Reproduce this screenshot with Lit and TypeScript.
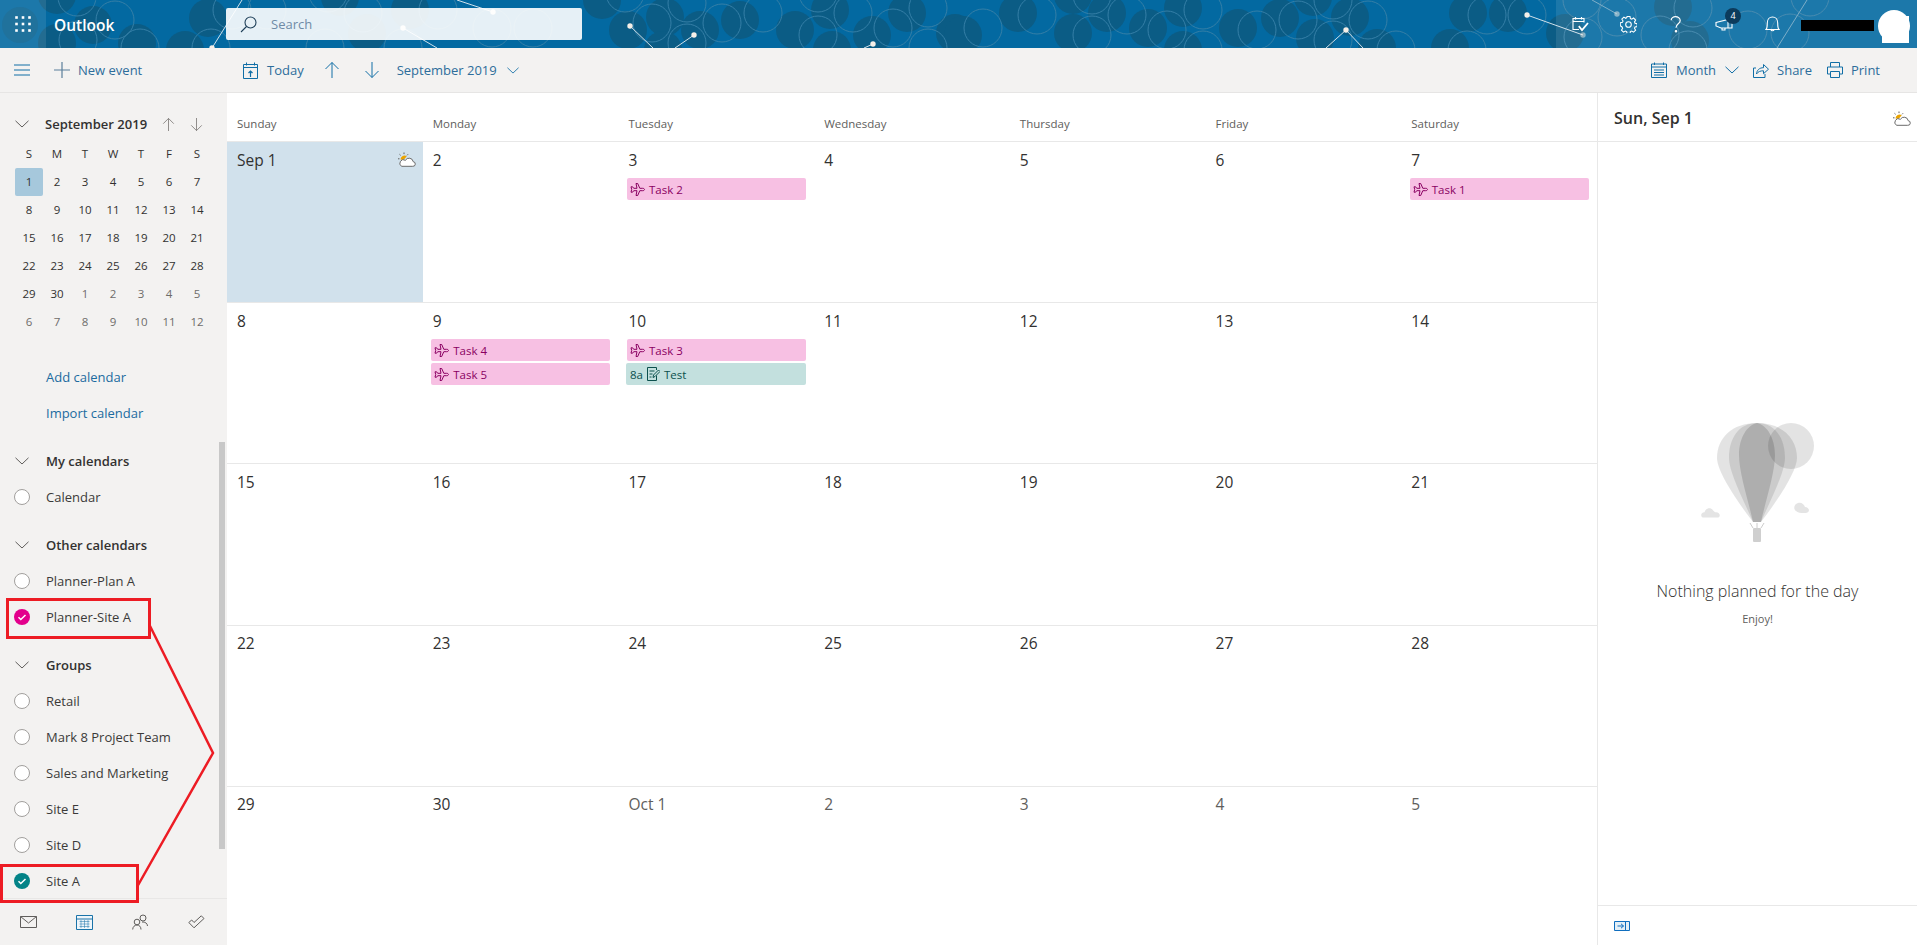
import { LitElement, html, css, svg } from 'lit';
import { customElement } from 'lit/decorators.js';

// header pattern, read off the reference as [x, y] per strip
const fills = [
  [57, -5], [93, 25], [57, 43], [208, 18], [185, 50], [137, 43], [340, -3], [410, 10], [367, 33],
  [602, 0], [628, 30], [665, 17], [700, 30], [740, 20], [795, 30], [830, 10], [832, 50], [872, 35], [907, 13], [663, 50], [955, 33],
  [1018, 13], [1073, 33], [1107, 13], [1148, 28], [1183, 8], [1183, 50], [1238, 28], [1280, 18], [1315, 38], [1350, 17], [1377, 48], [963, 35], [1073, -5], [1313, -3],
  [1468, 13], [1508, 13], [1450, 48], [1565, 33], [1673, 7], [1690, 40],
];
const rings = [
  [77, -3], [115, 20], [78, 40], [140, 48], [211, 48], [232, 10], [267, 10], [328, -7], [363, 13], [325, 48], [403, 48], [438, 10],
  [492, 28], [533, 28], [625, -7], [652, 23], [687, 3], [687, 43], [722, 23], [763, 13], [818, -7], [818, 35], [853, 13], [893, 28], [928, 8], [928, 48],
  [983, 28], [1037, 15], [1092, -5], [1092, 35], [1127, 15], [1167, 30], [1203, 10], [1203, 50], [1257, 30], [1298, 20], [1333, 0], [1333, 40], [1368, 20], [1396, 50],
  [1487, 15], [1527, 15], [1467, 50], [1583, 37], [1582, 0], [1617, 17], [1660, 35], [1688, 50], [1693, 8], [1748, 30], [1790, 33], [1810, -3],
];
const wires = [
  [242, 0, 212, 48], [403, 28, 437, 48], [457, 0, 493, 12], [630, 26, 653, 48], [694, 35, 675, 48], [873, 44, 864, 48],
  [1346, 30, 1326, 48], [1346, 30, 1363, 48], [1527, 15, 1583, 35],
];
const dimWires = [[1592, 0, 1617, 14], [1807, 0, 1777, 48]];
const nodes = [[212, 48, 1], [403, 28, 1], [493, 12, 1], [630, 26, 1], [694, 35, 1], [873, 44, 1], [1346, 30, 1], [1527, 15, 1], [1583, 35, 0.5], [1617, 14, 0.5]];

const plane = svg`<svg class="ic" width="15" height="15" viewBox="0 0 15 15" fill="none" stroke="currentColor" stroke-width="1">
  <path d="M14.500 7.500c0-.7-.8-1.200-1.800-1.200H9.800L7.700 1.500H6l1 4.800H3.700L2.600 4.800H1l.7 2.700L1 10.200h1.600l1.100-1.500H7l-1 4.800h1.700l2.100-4.800h2.900c1 0 1.800-.5 1.800-1.200z"/></svg>`;

const weather = svg`<svg width="18" height="15" viewBox="0 0 18 15" fill="none">
  <path d="M2.500 7.500a4 4 0 0 1 6.300-3.300L5.500 8z" fill="#eaa300"/>
  <path d="M6 .5v1.600M1.500 2.300l1.100 1M0 6.800h1.500M10 2.300l-1 1" stroke="#5f5f5f" stroke-width="1"/>
  <path d="M3.500 14.300h11.200a2.300 2.300 0 0 0 .5-4.600 4.200 4.200 0 0 0-7.800-1.400A3 3 0 0 0 3.500 14.300z" fill="#fff" stroke="#6b6b6b" stroke-width="1"/></svg>`;

const up = svg`<svg width="16" height="18" viewBox="0 0 16 18" fill="none" stroke="currentColor"><path d="M8 17V1.500M1.500 8L8 1.500 14.500 8"/></svg>`;
const down = svg`<svg width="16" height="18" viewBox="0 0 16 18" fill="none" stroke="currentColor"><path d="M8 1v15.500M1.500 10L8 16.500 14.500 10"/></svg>`;
const chevron = svg`<svg width="14" height="8" viewBox="0 0 14 8" fill="none" stroke="currentColor"><path d="M.5.800L7 7l6.500-6.200"/></svg>`;
const smallChevron = svg`<svg width="12" height="7" viewBox="0 0 14 8" fill="none" stroke="currentColor"><path d="M.5.800L7 7l6.500-6.200"/></svg>`;

const monthDays = [
  [1, 2, 3, 4, 5, 6, 7], [8, 9, 10, 11, 12, 13, 14], [15, 16, 17, 18, 19, 20, 21], [22, 23, 24, 25, 26, 27, 28],
  [29, 30, 1, 2, 3, 4, 5], [6, 7, 8, 9, 10, 11, 12],
];

type Ev = { label: string; time?: string };
const events: Record<string, Ev[]> = {
  '3': [{ label: 'Task 2' }],
  '7': [{ label: 'Task 1' }],
  '9': [{ label: 'Task 4' }, { label: 'Task 5' }],
  '10': [{ label: 'Task 3' }, { label: 'Test', time: '8a' }],
};

const cells = [
  'Sep 1', '2', '3', '4', '5', '6', '7', '8', '9', '10', '11', '12', '13', '14', '15', '16', '17', '18', '19', '20', '21',
  '22', '23', '24', '25', '26', '27', '28', '29', '30', 'Oct 1', '2', '3', '4', '5',
];

@customElement('app-root')
export class AppRoot extends LitElement {
  static styles = css`
    :host {
      display: block;
      position: relative;
      width: 1917px;
      height: 945px;
      overflow: hidden;
      background: #fff;
      font-family: 'Open Sans', 'Liberation Sans', sans-serif;
      color: #323130;
    }

    .header {
      position: relative;
      height: 48px;
      display: flex;
      background: #0369a1;
      overflow: hidden;
    }
    .pattern {
      position: absolute;
      left: 0;
      top: 0;
    }
    .waffle {
      position: relative;
      width: 46px;
      display: flex;
      align-items: center;
      justify-content: center;
      background: rgba(255, 255, 255, 0.1);
    }
    .brand {
      position: relative;
      width: 172px;
      margin-left: 8px;
      line-height: 50px;
      font-size: 15.5px;
      font-weight: 600;
      color: #fff;
    }
    .search {
      position: relative;
      width: 356px;
      height: 32px;
      margin-top: 8px;
      display: flex;
      align-items: center;
      gap: 14px;
      padding-left: 14px;
      box-sizing: border-box;
      border-radius: 2px;
      background: rgba(255, 255, 255, 0.9);
      color: #6f8ba6;
      font-size: 13px;
    }
    .top-right {
      position: relative;
      margin-left: auto;
      width: 361px;
      display: flex;
      align-items: center;
      background: rgba(255, 255, 255, 0.1);
      color: #fff;
    }
    .top-btn {
      position: relative;
      width: 48px;
      height: 48px;
      display: flex;
      align-items: center;
      justify-content: center;
    }
    .badge {
      position: absolute;
      left: 25px;
      top: 8px;
      width: 16px;
      height: 16px;
      border-radius: 50%;
      background: #0c3b5c;
      font-size: 9px;
      line-height: 16px;
      text-align: center;
    }
    .masked {
      width: 73px;
      height: 11px;
      margin: 3px 0 0 5px;
      background: #000;
    }
    .avatar {
      position: relative;
      width: 32px;
      height: 32px;
      margin: 4px 0 0 4px;
      border-radius: 50%;
      background: #fff;
    }
    .avatar::after {
      content: '';
      position: absolute;
      left: 4px;
      top: 6px;
      width: 27px;
      height: 27px;
      background: #fff;
    }

    .toolbar {
      height: 44px;
      display: flex;
      align-items: center;
      background: #f3f2f1;
      border-bottom: 1px solid #e6e5e4;
      color: #2d6d9b;
      font-size: 13px;
    }
    .tool {
      display: flex;
      align-items: center;
      color: #2d6d9b;
    }
    .tool svg {
      color: #106ea6;
      flex: none;
    }
    .tool-left {
      width: 227px;
      display: flex;
      align-items: center;
      flex: none;
    }
    .tool-right {
      margin-left: auto;
      padding-right: 37px;
      display: flex;
      align-items: center;
    }

    .main {
      position: relative;
      display: flex;
      height: 852px;
    }

    .side {
      width: 227px;
      flex: none;
      display: flex;
      flex-direction: column;
      background: #f3f2f1;
    }
    .side-scroll {
      flex: 1;
      overflow: hidden;
      padding-top: 15px;
    }
    .mini-head {
      height: 32px;
      display: flex;
      align-items: center;
      padding-left: 15px;
      box-sizing: border-box;
      color: #605e5c;
    }
    .mini-title {
      margin-left: 16px;
      width: 117px;
      font-size: 13px;
      font-weight: 600;
      color: #323130;
      white-space: nowrap;
    }
    .mini-head .arrows {
      display: flex;
      gap: 15px;
      color: #7a7674;
    }
    .mini-head .arrows svg {
      width: 13px;
      height: 15px;
    }
    .mini {
      display: grid;
      grid-template-columns: repeat(7, 28px);
      grid-auto-rows: 28px;
      margin-left: 15px;
      font-size: 11.5px;
      text-align: center;
      line-height: 28px;
      color: #323130;
    }
    .mini .sel {
      background: #a6c8dc;
      border-radius: 2px;
    }
    .mini .off {
      color: #6e6c6a;
    }
    .links {
      margin-top: 23px;
      padding-left: 46px;
      font-size: 13px;
      color: #1b6b9f;
    }
    .links div {
      height: 36px;
      line-height: 36px;
    }
    .section {
      margin-top: 12px;
    }
    .sec-head {
      height: 36px;
      display: flex;
      align-items: center;
      padding-left: 15px;
      gap: 17px;
      font-size: 13px;
      font-weight: 600;
      color: #605e5c;
    }
    .sec-head span {
      color: #323130;
    }
    .item {
      height: 36px;
      display: flex;
      align-items: center;
      padding-left: 14px;
      gap: 16px;
      font-size: 13px;
      color: #3b3a39;
      white-space: nowrap;
    }
    .dot {
      width: 16px;
      height: 16px;
      box-sizing: border-box;
      border: 1px solid #a19f9d;
      border-radius: 50%;
      background: #fff;
      flex: none;
      display: flex;
    }
    .dot.pink {
      background: #e3008c;
      border: 0;
    }
    .dot.teal {
      background: #038387;
      border: 0;
    }
    .side-foot {
      height: 47px;
      box-sizing: border-box;
      border-top: 1px solid #e8e7e6;
      flex: none;
      display: flex;
      align-items: center;
    }
    .side-foot div {
      width: 56px;
      display: flex;
      justify-content: center;
      color: #605e5c;
    }
    .scrollbar {
      position: absolute;
      left: 219px;
      top: 349px;
      width: 6px;
      height: 407px;
      background: #c8c8c8;
    }

    .cal {
      width: 1370px;
      flex: none;
    }
    .days {
      display: grid;
      grid-template-columns: repeat(7, 1fr);
      height: 49px;
      box-sizing: border-box;
      border-bottom: 1px solid #e8e8e8;
      font-size: 11.5px;
      color: #605e5c;
    }
    .days div {
      padding: 23px 0 0 10px;
    }
    .grid {
      display: grid;
      grid-template-columns: repeat(7, 1fr);
      grid-auto-rows: 161.2px;
    }
    .cell {
      box-sizing: border-box;
      border-bottom: 1px solid #e8e8e8;
      overflow: hidden;
    }
    .cell.today {
      background: #d1e1ec;
    }
    .date {
      height: 36px;
      box-sizing: border-box;
      display: flex;
      align-items: center;
      justify-content: space-between;
      padding: 0 7px 1px 10px;
      font-size: 15.5px;
      color: #323130;
    }
    .date.off {
      color: #605e5c;
    }
    .ev {
      height: 22px;
      margin: 0 8px 2px 8.5px;
      display: flex;
      align-items: center;
      gap: 4px;
      padding-left: 3px;
      border-radius: 2px;
      background: #f7c0e3;
      color: #8a0062;
      font-size: 11.5px;
    }
    .ev.timed {
      margin-left: 7.5px;
      gap: 4px;
      background: #c3e0de;
      color: #0c504d;
      padding-left: 4px;
    }

    .panel {
      flex: 1;
      display: flex;
      flex-direction: column;
      box-sizing: border-box;
      border-left: 1px solid #e8e8e8;
    }
    .panel-head {
      height: 49px;
      flex: none;
      box-sizing: border-box;
      border-bottom: 1px solid #e8e8e8;
      display: flex;
      align-items: center;
      justify-content: space-between;
      padding: 2px 6px 0 16px;
      font-size: 16px;
      font-weight: 600;
      color: #323130;
    }
    .panel-body {
      flex: 1;
      display: flex;
      flex-direction: column;
      align-items: center;
      padding-top: 281px;
    }
    .nothing {
      margin-top: 37px;
      font-size: 16px;
      font-weight: 300;
      color: #323130;
    }
    .enjoy {
      margin-top: 9px;
      font-size: 11px;
      color: #605e5c;
    }
    .panel-foot {
      height: 39px;
      flex: none;
      border-top: 1px solid #e8e8e8;
      display: flex;
      align-items: center;
      padding: 0 0 0 16px;
    }

    .marks {
      position: absolute;
      left: 0;
      top: 0;
      pointer-events: none;
    }
  `;

  renderHeader() {
    return html`<div class="header">
      <svg class="pattern" width="1917" height="48" viewBox="0 0 1917 48">
        ${fills.map(([x, y]) => svg`<circle cx=${x} cy=${y} r="19" fill="#0b5c85"/>`)}
        ${rings.map(([x, y]) => svg`<circle cx=${x} cy=${y} r="19" fill="none" stroke="#357fa7" stroke-width="1"/>`)}
        <circle cx="20" cy="25" r="18" fill="#0b5c85" opacity=".55"/>
        ${wires.map(([a, b, c, d]) => svg`<line x1=${a} y1=${b} x2=${c} y2=${d} stroke="#cfe0ea" stroke-width="1"/>`)}
        ${dimWires.map(([a, b, c, d]) => svg`<line x1=${a} y1=${b} x2=${c} y2=${d} stroke="#6fa5c2" stroke-width="1"/>`)}
        ${nodes.map(([x, y, o]) => svg`<circle cx=${x} cy=${y} r="2.700" fill="#f5efe8" opacity=${o}/>`)}
      </svg>
      <div class="waffle">
        <svg width="16" height="16" viewBox="0 0 16 16" fill="#fff">
          ${[1.5, 8, 14.5].flatMap((y) => [1.5, 8, 14.5].map((x) => svg`<rect x=${x - 1.3} y=${y - 1.3} width="2.600" height="2.600"/>`))}
        </svg>
      </div>
      <div class="brand">Outlook</div>
      <div class="search">
        <svg width="17" height="17" viewBox="0 0 17 17" fill="none" stroke="#1f3f58" stroke-width="1.100">
          <circle cx="10.500" cy="6.500" r="5.500"/><path d="M6.500 10.500L1 16"/>
        </svg>
        <span>Search</span>
      </div>
      <div class="top-right">
        <div class="top-btn">
          <svg width="17" height="16" viewBox="0 0 17 16" fill="none" stroke="#fff" stroke-width="1.100">
            <path d="M7 13.500H1V2.500h11v4M1 5.500h11M3.500 1v2.500M9.500 1v2.500"/><path d="M6.800 10.200l3.200 3.800 6-7" stroke-width="1.800"/>
          </svg>
        </div>
        <div class="top-btn">
          <svg width="17" height="17" viewBox="0 0 17 17" fill="none" stroke="#fff" stroke-width="1.100">
            <circle cx="8.500" cy="8.500" r="2.800"/>
            <path d="M7 .7h3l.4 2.200 1.400.6 1.900-1.200 2.100 2.100-1.200 1.900.6 1.400 2.200.4v3l-2.200.4-.6 1.400 1.200 1.900-2.100 2.100-1.900-1.200-1.400.6-.4 2.200H7l-.4-2.200-1.400-.6-1.900 1.200-2.100-2.100 1.200-1.900-.6-1.400L0 10.200v-3l2.200-.4.600-1.400L1.600 3.500l2.100-2.100 1.900 1.200 1-.6z" transform="translate(.3 -.2) scale(.97)"/>
          </svg>
        </div>
        <div class="top-btn">
          <svg width="12" height="17" viewBox="0 0 12 17" fill="none" stroke="#fff" stroke-width="1.200">
            <path d="M1.200 4.200C1.200 2 3.200.7 5.500.7c2.500 0 4.700 1.400 4.700 3.700 0 3.400-4.200 3.300-4.200 7.300"/><circle cx="6" cy="15.300" r=".7" fill="#fff"/>
          </svg>
        </div>
        <div class="top-btn">
          <svg width="18" height="13" viewBox="0 0 18 13" fill="none" stroke="#fff" stroke-width="1.100">
            <path d="M1 4.500L13 1.500v8.500H6L1 8zM1 4.500v3.500M13 3.500h4v6.500h-4M7 10v2h3v-2"/>
          </svg>
          <span class="badge">4</span>
        </div>
        <div class="top-btn">
          <svg width="15" height="17" viewBox="0 0 15 17" fill="none" stroke="#fff" stroke-width="1.100">
            <path d="M1 13.500c1.300-1.200 1.300-3 1.300-6.500C2.300 3.500 4.500 1 7.500 1s5.200 2.500 5.200 6c0 3.500 0 5.300 1.300 6.500zM5.800 13.500a1.800 1.800 0 0 0 3.400 0"/>
          </svg>
        </div>
        <div class="masked"></div>
        <div class="avatar"></div>
      </div>
    </div>`;
  }

  renderToolbar() {
    return html`<div class="toolbar">
      <div class="tool-left">
        <svg style="margin-left:14px" width="16" height="12" viewBox="0 0 16 12" stroke="#106ea6"><path d="M0 1h16M0 6h16M0 11h16"/></svg>
        <div class="tool" style="margin-left:24px;gap:8px">
          <svg width="16" height="16" viewBox="0 0 16 16" stroke="#5b7f9b" stroke-width="1.200"><path d="M8 0v16M0 8h16"/></svg>
          <span>New event</span>
        </div>
      </div>
      <div class="tool" style="margin-left:16px;gap:9px">
        <svg width="15" height="17" viewBox="0 0 15 17" fill="none" stroke="currentColor">
          <path d="M.5 2.500h14v14H.5zM.5 5.500h14M3.500.5v3M11.500.5v3"/><path d="M7.500 15V9M5.500 11l2-2 2 2" stroke-width="1.200"/>
        </svg>
        <span>Today</span>
      </div>
      <div class="tool" style="margin-left:20px">${up}</div>
      <div class="tool" style="margin-left:24px">${down}</div>
      <div class="tool" style="margin-left:17px;gap:10px">
        <span>September 2019</span>${smallChevron}
      </div>
      <div class="tool-right">
        <div class="tool" style="gap:9px">
          <svg width="16" height="16" viewBox="0 0 16 16" fill="none" stroke="currentColor">
            <path d="M.5 2h15v13.500H.5zM.5 5h15M3.500 .5v2.500M12.500 .5v2.500M3 8h10M3 10.500h10M3 13h10"/>
          </svg>
          <span>Month</span>${chevron}
        </div>
        <div class="tool" style="margin-left:14px;gap:8px">
          <svg width="16" height="15" viewBox="0 0 16 15" fill="none" stroke="currentColor">
            <path d="M3 5H.5v9.500H12V11"/><path d="M3.500 11c.3-4 3-6.300 7-6.300V1.500l5 4.700-5 4.500V7.800c-3.200 0-5.500.8-7 3.200z"/>
          </svg>
          <span>Share</span>
        </div>
        <div class="tool" style="margin-left:15px;gap:8px">
          <svg width="16" height="16" viewBox="0 0 16 16" fill="none" stroke="currentColor">
            <path d="M3.500 5V.5h9V5M3.500 12H.5V5h15v7h-3M3.500 9.500h9v6h-9z"/>
          </svg>
          <span>Print</span>
        </div>
      </div>
    </div>`;
  }

  renderMini() {
    return html`<div class="mini-head">
        ${chevron}
        <div class="mini-title">September 2019</div>
        <div class="arrows">${up}${down}</div>
      </div>
      <div class="mini">
        ${['S', 'M', 'T', 'W', 'T', 'F', 'S'].map((d) => html`<div>${d}</div>`)}
        ${monthDays.map((week, w) =>
          week.map((d, i) => {
            const off = w > 4 || (w === 4 && i > 1);
            const sel = w === 0 && i === 0;
            return html`<div class="${off ? 'off' : ''} ${sel ? 'sel' : ''}">${d}</div>`;
          })
        )}
      </div>
      <div class="links">
        <div>Add calendar</div>
        <div>Import calendar</div>
      </div>`;
  }

  renderItem(name: string, color = '') {
    const check = svg`<svg width="16" height="16" viewBox="0 0 16 16" fill="none" stroke="#fff" stroke-width="1.500"><path d="M4.500 8.300l2.300 2.200 4.700-4.500"/></svg>`;
    return html`<div class="item"><span class="dot ${color}">${color ? check : ''}</span>${name}</div>`;
  }

  renderSide() {
    return html`<div class="side">
      <div class="side-scroll">
        ${this.renderMini()}
        <div class="section">
          <div class="sec-head">${chevron}<span>My calendars</span></div>
          ${this.renderItem('Calendar')}
        </div>
        <div class="section">
          <div class="sec-head">${chevron}<span>Other calendars</span></div>
          ${this.renderItem('Planner-Plan A')}
          ${this.renderItem('Planner-Site A', 'pink')}
        </div>
        <div class="section">
          <div class="sec-head">${chevron}<span>Groups</span></div>
          ${this.renderItem('Retail')}
          ${this.renderItem('Mark 8 Project Team')}
          ${this.renderItem('Sales and Marketing')}
          ${this.renderItem('Site E')}
          ${this.renderItem('Site D')}
          ${this.renderItem('Site A', 'teal')}
        </div>
      </div>
      <div class="side-foot">
        <div>
          <svg width="17" height="12" viewBox="0 0 17 12" fill="none" stroke="currentColor"><path d="M.5.500h16v11H.5zM.5.500l8 6.500 8-6.500"/></svg>
        </div>
        <div>
          <svg width="17" height="16" viewBox="0 0 17 16" fill="#eef5fa" stroke="#1a73a8"><path d="M.5 1.500h16v14H.5z"/><path d="M.5 5h16"/><path d="M3.500 7.500h10M3.500 10h10M3.500 12.500h10M5 6v8M8.500 6v8M12 6v8" stroke-width=".5"/></svg>
        </div>
        <div>
          <svg width="16" height="16" viewBox="0 0 16 16" fill="none" stroke="currentColor"><circle cx="5" cy="8" r="2.800"/><circle cx="11" cy="4" r="3"/><path d="M.7 15.500c0-2.700 2-4.500 4.300-4.500s4 1.800 4 4.500M10 8c3-.5 5.500 1.500 5.500 4"/></svg>
        </div>
        <div>
          <svg width="17" height="14" viewBox="0 0 17 14" fill="none" stroke="currentColor"><path d="M.8 7.500L6 12.800 16 3.500 13.300.8 6 7.500 3.700 5z"/></svg>
        </div>
      </div>
    </div>`;
  }

  renderEvent(ev: Ev) {
    if (ev.time) {
      return html`<div class="ev timed">
        <span>${ev.time}</span>
        <svg width="13" height="14" viewBox="0 0 13 14" fill="none" stroke="currentColor">
          <path d="M9.500 8.500v5H.5v-13h9V3M2.500 4h5M2.500 7h3M2.500 10h2"/><path d="M6 10.500l.5-2.500 5-5 1.500 1.500-5 5z"/>
        </svg>
        <span>${ev.label}</span>
      </div>`;
    }
    return html`<div class="ev">${plane}<span>${ev.label}</span></div>`;
  }

  renderCalendar() {
    return html`<div class="cal">
      <div class="days">
        ${['Sunday', 'Monday', 'Tuesday', 'Wednesday', 'Thursday', 'Friday', 'Saturday'].map((d) => html`<div>${d}</div>`)}
      </div>
      <div class="grid">
        ${cells.map((c, i) => {
          const off = i > 29;
          const list = i < 14 ? events[c] ?? [] : [];
          return html`<div class="cell ${i === 0 ? 'today' : ''}">
            <div class="date ${off ? 'off' : ''}"><span>${c}</span>${i === 0 ? weather : ''}</div>
            ${list.map((ev) => this.renderEvent(ev))}
          </div>`;
        })}
      </div>
    </div>`;
  }

  renderPanel() {
    return html`<div class="panel">
      <div class="panel-head"><span>Sun, Sep 1</span>${weather}</div>
      <div class="panel-body">
        <svg width="120" height="120" viewBox="1 0 120 120">
          <path d="M60 0C35 0 20 15 20 35c0 15 25 50 36 64h8c11-14 36-49 36-64C100 15 85 0 60 0z" fill="#000" opacity=".11"/>
          <path d="M60 0C42 0 32 15 32 35c0 15 16 45 24 64h8c8-19 24-49 24-64C88 15 78 0 60 0z" fill="#000" opacity=".1"/>
          <path d="M60 0C50 2 42 15 42 32c0 18 10 48 14 67h8c4-19 14-49 14-67C78 15 70 2 60 0z" fill="#000" opacity=".14"/>
          <circle cx="94" cy="23" r="23" fill="#000" opacity=".11"/>
          <path d="M53 100l3 5M60 100v5M67 100l-3 5" stroke="#ccc" stroke-width="1"/>
          <rect x="56" y="105" width="8" height="14" rx="1" fill="#cfcfcf"/>
          <path d="M9 91c-3 0-3-5 1-5 1-4 6-5 8-2 1 1 2 2 3 2 4 0 5 5 1 5z" transform="translate(-3 -1) scale(1.050)" fill="#e4e4e4"/>
          <path d="M99 88c-3-2-2-7 2-8 3-1 6 1 7 4 4 0 6 5 1 6-3 .3-8 0-10-2z" fill="#e4e4e4"/>
        </svg>
        <div class="nothing">Nothing planned for the day</div>
        <div class="enjoy">Enjoy!</div>
      </div>
      <div class="panel-foot">
        <svg width="16" height="10" viewBox="0 0 16 10" fill="#e3eff7" stroke="#106ebe"><path d="M.5.500h15v9H.5zM11.500.500v9"/><path d="M3.500 5h6M7 2.800L9.500 5 7 7.200" fill="none"/></svg>
      </div>
    </div>`;
  }

  render() {
    return html`
      ${this.renderHeader()}
      ${this.renderToolbar()}
      <div class="main">
        ${this.renderSide()}
        ${this.renderCalendar()}
        ${this.renderPanel()}
        <div class="scrollbar"></div>
      </div>
      <svg class="marks" width="1917" height="945" viewBox="0 0 1917 945" fill="none" stroke="#ed1c24" stroke-width="3">
        <rect x="7.500" y="599.500" width="142" height="38"/>
        <rect x="1.500" y="865.500" width="136" height="36"/>
        <path d="M149 624L213 753 137 887" stroke-width="2.500"/>
      </svg>
    `;
  }
}
